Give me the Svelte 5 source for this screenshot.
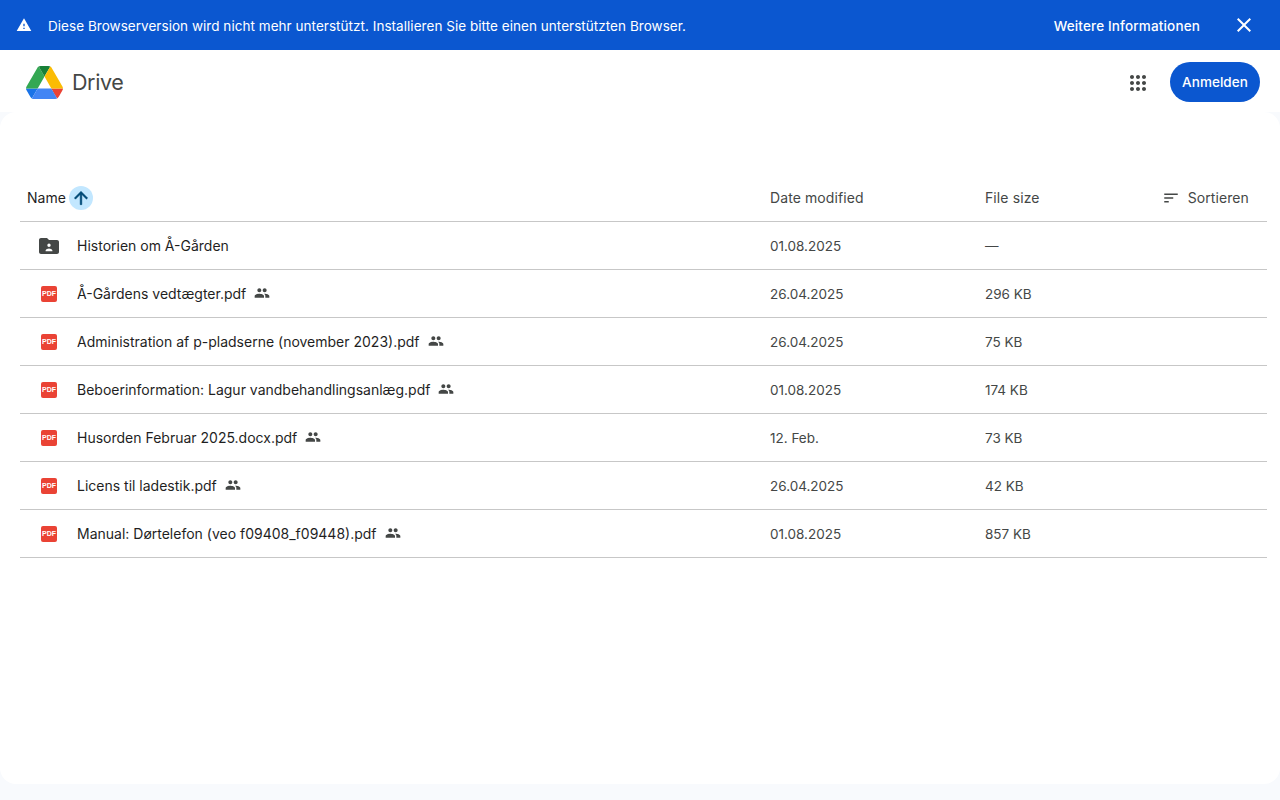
<script lang="ts">
  type Row = { name: string; modified: string; size: string; kind: 'folder' | 'pdf'; shared: boolean };

  const rows: Row[] = [
    { name: 'Historien om Å-Gården', modified: '01.08.2025', size: '—', kind: 'folder', shared: false },
    { name: 'Å-Gårdens vedtægter.pdf', modified: '26.04.2025', size: '296 KB', kind: 'pdf', shared: true },
    { name: 'Administration af p-pladserne (november 2023).pdf', modified: '26.04.2025', size: '75 KB', kind: 'pdf', shared: true },
    { name: 'Beboerinformation: Lagur vandbehandlingsanlæg.pdf', modified: '01.08.2025', size: '174 KB', kind: 'pdf', shared: true },
    { name: 'Husorden Februar 2025.docx.pdf', modified: '12. Feb.', size: '73 KB', kind: 'pdf', shared: true },
    { name: 'Licens til ladestik.pdf', modified: '26.04.2025', size: '42 KB', kind: 'pdf', shared: true },
    { name: 'Manual: Dørtelefon (veo f09408_f09448).pdf', modified: '01.08.2025', size: '857 KB', kind: 'pdf', shared: true },
  ];
</script>

<div class="page">
  <div class="banner">
    <svg class="warn" width="16" height="16" viewBox="0 0 24 24"><path fill="#fff" d="M1 21h22L12 2 1 21zm12-3h-2v-2h2v2zm0-4h-2v-4h2v4z" /></svg>
    <span class="banner-text">Diese Browserversion wird nicht mehr unterstützt. Installieren Sie bitte einen unterstützten Browser.</span>
    <span class="banner-link">Weitere Informationen</span>
    <svg class="close" width="24" height="24" viewBox="0 0 24 24"><path fill="#fff" d="M19 6.41 17.59 5 12 10.59 6.41 5 5 6.41 10.59 12 5 17.59 6.41 19 12 13.41 17.59 19 19 17.59 13.41 12z" /></svg>
  </div>

  <header class="topbar">
    <svg class="logo" width="37" height="33" viewBox="0 0 87.3 78">
      <path fill="#1a73e8" d="m6.6 66.85 3.85 6.65c.8 1.4 1.95 2.5 3.3 3.3L27.5 53H0c0 1.55.4 3.1 1.2 4.5z" />
      <path fill="#34a853" d="M43.65 25 29.9 1.2c-1.35.8-2.5 1.9-3.3 3.3L1.2 48.5A9.06 9.06 0 0 0 0 53h27.5z" />
      <path fill="#ea4335" d="M73.55 76.8c1.35-.8 2.5-1.9 3.3-3.3l1.6-2.75L86.1 57.5c.8-1.4 1.2-2.95 1.2-4.5H59.798l5.852 11.5z" />
      <path fill="#188038" d="M43.65 25 57.4 1.2C56.05.4 54.5 0 52.9 0H34.4c-1.6 0-3.15.45-4.5 1.2z" />
      <path fill="#4285f4" d="M59.8 53H27.5L13.75 76.8c1.35.8 2.9 1.2 4.5 1.2h50.8c1.6 0 3.15-.45 4.5-1.2z" />
      <path fill="#fbbc04" d="M73.4 26.5 60.7 4.5c-.8-1.4-1.95-2.5-3.3-3.3L43.65 25 59.8 53h27.45c0-1.55-.4-3.1-1.2-4.5z" />
    </svg>
    <span class="wordmark">Drive</span>
    <div class="spacer"></div>
    <svg class="apps" width="24" height="24" viewBox="0 0 24 24"><path fill="#444746" d="M6 8c1.1 0 2-.9 2-2s-.9-2-2-2-2 .9-2 2 .9 2 2 2zm6 12c1.1 0 2-.9 2-2s-.9-2-2-2-2 .9-2 2 .9 2 2 2zm-6 0c1.1 0 2-.9 2-2s-.9-2-2-2-2 .9-2 2 .9 2 2 2zm0-6c1.1 0 2-.9 2-2s-.9-2-2-2-2 .9-2 2 .9 2 2 2zm6 0c1.1 0 2-.9 2-2s-.9-2-2-2-2 .9-2 2 .9 2 2 2zm4-8c0 1.1.9 2 2 2s2-.9 2-2-.9-2-2-2-2 .9-2 2zm-4 2c1.1 0 2-.9 2-2s-.9-2-2-2-2 .9-2 2 .9 2 2 2zm6 6c1.1 0 2-.9 2-2s-.9-2-2-2-2 .9-2 2 .9 2 2 2zm0 6c1.1 0 2-.9 2-2s-.9-2-2-2-2 .9-2 2 .9 2 2 2z" /></svg>
    <button class="signin">Anmelden</button>
  </header>

  <main class="card">
    <div class="table">
      <div class="row head">
        <div class="col-name">
          <span class="name-label">Name</span>
          <span class="sort-btn">
            <svg width="20" height="20" viewBox="0 0 24 24"><path fill="#004a77" stroke="#004a77" stroke-width="0.6" d="M4 12l1.41 1.41L11 7.83V20h2V7.83l5.58 5.59L20 12l-8-8-8 8z" /></svg>
          </span>
        </div>
        <div class="col-date">Date modified</div>
        <div class="col-size">File size</div>
        <div class="col-sort">
          <svg width="18" height="18" viewBox="0 0 24 24"><path fill="#444746" d="M3 18h6v-2H3v2zM3 6v2h18V6H3zm0 7h12v-2H3v2z" /></svg>
          <span>Sortieren</span>
        </div>
      </div>

      {#each rows as row}
        <div class="row">
          <div class="col-name">
            <span class="file-icon">
              {#if row.kind === 'folder'}
                <svg width="24" height="24" viewBox="0 0 24 24"><path fill="#444746" d="M20 6h-8l-2-2H4c-1.1 0-2 .9-2 2v12c0 1.1.9 2 2 2h16c1.1 0 2-.9 2-2V8c0-1.1-.9-2-2-2zM12 9.600a1.700 1.700 0 1 1 0 3.400 1.700 1.700 0 0 1 0-3.400zM8.600 16.600c0-1.300 2.300-2.200 3.400-2.200s3.400.9 3.400 2.200v.7H8.600z" /></svg>
              {:else}
                <span class="pdf">PDF</span>
              {/if}
            </span>
            <span class="file-name">{row.name}</span>
            {#if row.shared}
              <svg class="people" width="16" height="16" viewBox="0 0 24 24"><path fill="#444746" d="M16 11c1.66 0 2.99-1.34 2.99-3S17.660 5 16 5s-3 1.340-3 3 1.340 3 3 3zm-8 0c1.660 0 2.990-1.340 2.990-3S9.660 5 8 5 5 6.340 5 8s1.340 3 3 3zm0 2c-2.330 0-7 1.170-7 3.500V19h14v-2.500c0-2.330-4.670-3.500-7-3.500zm8 0c-.290 0-.620.020-.970.050 1.160.840 1.970 1.970 1.970 3.450V19h6v-2.500c0-2.330-4.670-3.500-7-3.500z" /></svg>
            {/if}
          </div>
          <div class="col-date">{row.modified}</div>
          <div class="col-size">{row.size}</div>
          <div class="col-sort"></div>
        </div>
      {/each}
    </div>
  </main>
</div>

<style>
  :global(body) {
    background: #f8fafd;
    font-family: Inter, Roboto, "Liberation Sans", sans-serif;
  }
  .page {
    height: 800px;
    display: flex;
    flex-direction: column;
    overflow: hidden;
  }
  .banner {
    height: 50px;
    flex: none;
    background: #0b57d0;
    color: #fff;
    display: flex;
    align-items: center;
    padding: 1px 24px 0 16px;
    box-sizing: border-box;
    font-size: 13.5px;
  }
  .banner-text {
    margin-left: 16px;
    flex: 1;
    letter-spacing: 0.04px;
  }
  .banner-link {
    font-weight: 500;
    margin-right: 32px;
    letter-spacing: 0.15px;
  }
  .warn, .close { margin-top: -1px; }
  .topbar {
    height: 62px;
    flex: none;
    display: flex;
    align-items: center;
    padding: 2px 20px 0 26px;
    box-sizing: border-box;
    background: #fff;
  }
  .wordmark {
    margin-left: 9px;
    font-size: 21.5px;
    color: #444746;
    letter-spacing: -0.4px;
  }
  .spacer { flex: 1; }
  .apps { margin: 2px 20px 0 0; }
  .signin {
    width: 90px;
    height: 40px;
    border: 0;
    border-radius: 20px;
    background: #0b57d0;
    color: #fff;
    font: 500 13.5px Inter, Roboto, "Liberation Sans", sans-serif;
    letter-spacing: 0.05px;
    padding: 0 0 1px;
  }
  .card {
    height: 672px;
    flex: none;
    background: #fff;
    border-radius: 16px;
    padding: 62px 13px 0 20px;
    box-sizing: border-box;
  }
  .row {
    display: grid;
    grid-template-columns: 750px 215px 1fr 120px;
    height: 48px;
    box-sizing: border-box;
    align-items: center;
    border-bottom: 1px solid #c7c7c7;
    font-size: 13.5px;
    color: #444746;
  }
  .head { font-size: 14px; letter-spacing: 0.1px; }
  .col-name {
    display: flex;
    align-items: center;
    color: #1f1f1f;
    min-width: 0;
    font-size: 14px;
    letter-spacing: 0;
  }
  .name-label { margin-left: 7px; }
  .sort-btn {
    width: 24px;
    height: 24px;
    margin-left: 3px;
    border-radius: 50%;
    background: #c2e7ff;
    display: flex;
    align-items: center;
    justify-content: center;
  }
  .col-sort {
    display: flex;
    align-items: center;
    justify-content: flex-end;
    gap: 8px;
    padding-right: 18px;
  }
  .file-icon {
    width: 24px;
    height: 24px;
    margin-left: 17px;
    margin-right: 16px;
    display: flex;
    align-items: center;
    justify-content: center;
  }
  .pdf {
    width: 16px;
    height: 16px;
    border-radius: 2px;
    background: #ea4335;
    color: #fff;
    font-size: 7px;
    font-weight: 900;
    line-height: 16px;
    text-align: center;
    font-family: "Liberation Sans", sans-serif;
  }
  .people { margin-left: 8px; margin-top: -2px; }
</style>
